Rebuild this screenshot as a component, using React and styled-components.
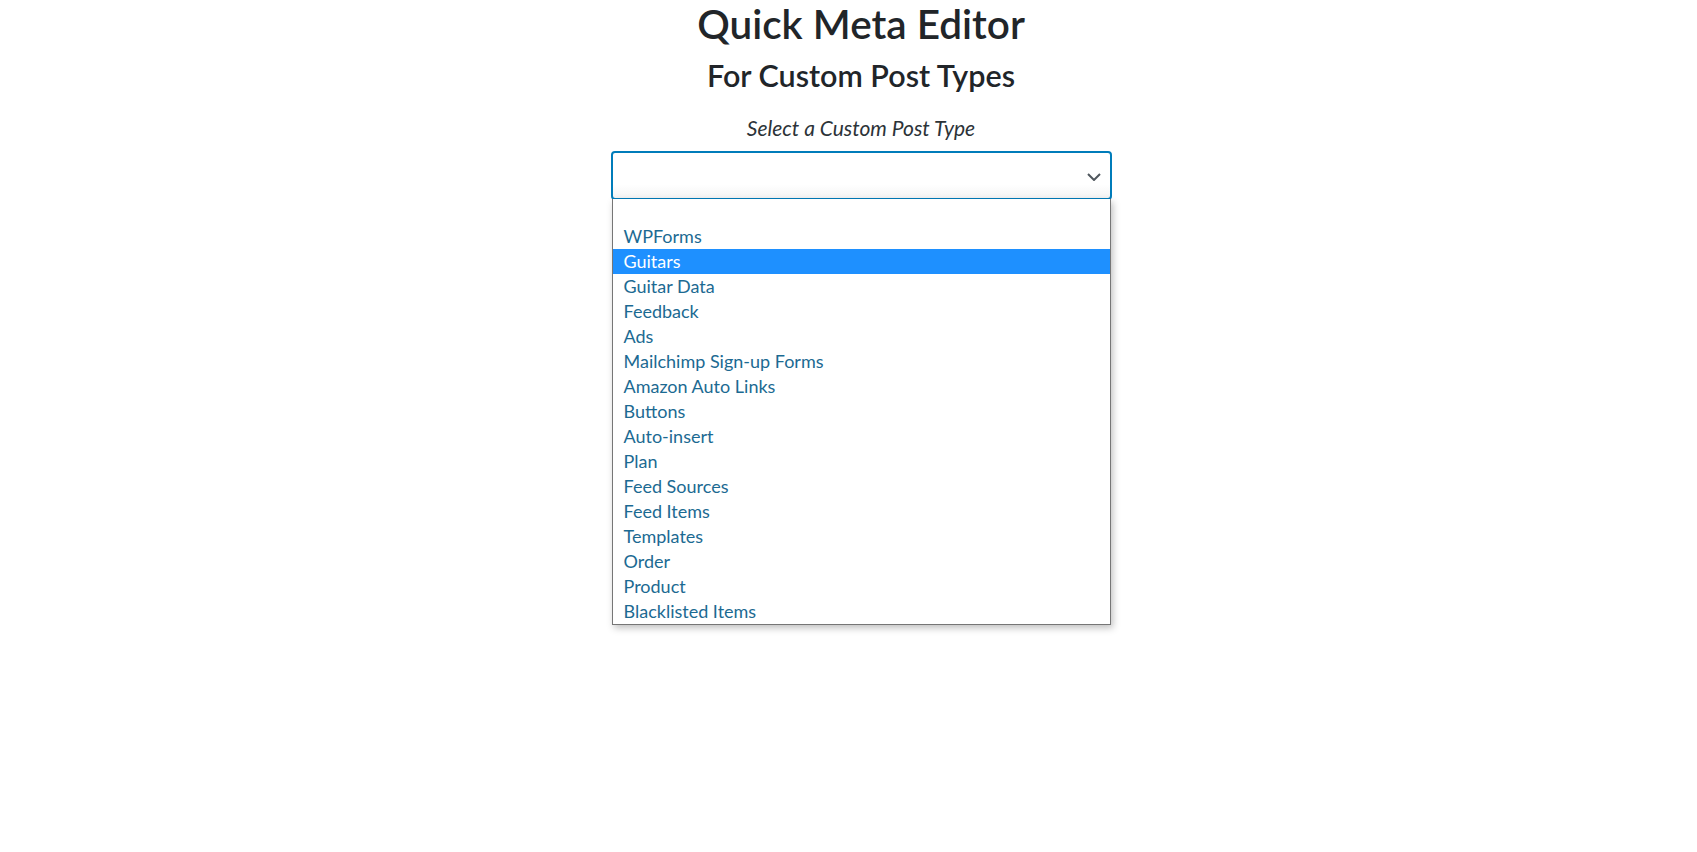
import React from 'react';
import styled, { createGlobalStyle } from 'styled-components';

const GlobalStyle = createGlobalStyle`
  body {
    margin: 0;
    background: #ffffff;
    font-family: Lato, "Liberation Sans", sans-serif;
    color: #212529;
  }
`;

const Page = styled.div`
  display: flex;
  flex-direction: column;
  align-items: center;
  padding-left: 25px;
  min-height: 852px;
`;

const Title = styled.h1`
  margin: 0;
  font-size: 40.5px;
  font-weight: 600;
  line-height: 48px;
  color: #212529;
`;

const Subtitle = styled.h3`
  margin: 0;
  margin-top: 7px;
  font-size: 30.5px;
  font-weight: 600;
  line-height: 40px;
  color: #212529;
`;

const Label = styled.label`
  margin-top: 20px;
  font-size: 21px;
  font-style: italic;
  line-height: 26px;
  color: #2c3338;
`;

const SelectWrap = styled.div`
  position: relative;
  width: 501px;
  margin-top: 10px;
`;

const SelectBox = styled.div`
  box-sizing: border-box;
  height: 49px;
  border: 2px solid #007cba;
  border-radius: 4px;
  background: linear-gradient(#ffffff 70%, #f4f4f4);
  display: flex;
  align-items: center;
  justify-content: flex-end;
  padding-right: 9px;
  padding-top: 2px;
`;

const Chevron = () => (
  <svg width="14" height="8" viewBox="0 0 14 8">
    <path d="M1 1l6 6 6-6" fill="none" stroke="#50575e" strokeWidth="2" />
  </svg>
);

const Menu = styled.ul`
  position: absolute;
  top: 48px;
  left: 1px;
  right: 1px;
  margin: 0;
  padding: 0;
  list-style: none;
  background: #fff;
  border: 1px solid #767676;
  border-top: none;
  box-shadow: 2px 3px 7px rgba(0, 0, 0, 0.25);
`;

const Option = styled.li`
  height: 25px;
  line-height: 25px;
  padding-left: 11px;
  font-size: 18px;
  color: ${({ $selected }) => ($selected ? '#ffffff' : '#1c6a92')};
  background: ${({ $selected }) => ($selected ? '#1e90ff' : 'transparent')};
  white-space: nowrap;
`;

const options = [
  '',
  'WPForms',
  'Guitars',
  'Guitar Data',
  'Feedback',
  'Ads',
  'Mailchimp Sign-up Forms',
  'Amazon Auto Links',
  'Buttons',
  'Auto-insert',
  'Plan',
  'Feed Sources',
  'Feed Items',
  'Templates',
  'Order',
  'Product',
  'Blacklisted Items',
];

export default function App() {
  return (
    <>
      <GlobalStyle />
      <Page>
        <Title>Quick Meta Editor</Title>
        <Subtitle>For Custom Post Types</Subtitle>
        <Label>Select a Custom Post Type</Label>
        <SelectWrap>
          <SelectBox>
            <Chevron />
          </SelectBox>
          <Menu>
            {options.map((o, i) => (
              <Option key={i} $selected={o === 'Guitars'}>
                {o}
              </Option>
            ))}
          </Menu>
        </SelectWrap>
      </Page>
    </>
  );
}
